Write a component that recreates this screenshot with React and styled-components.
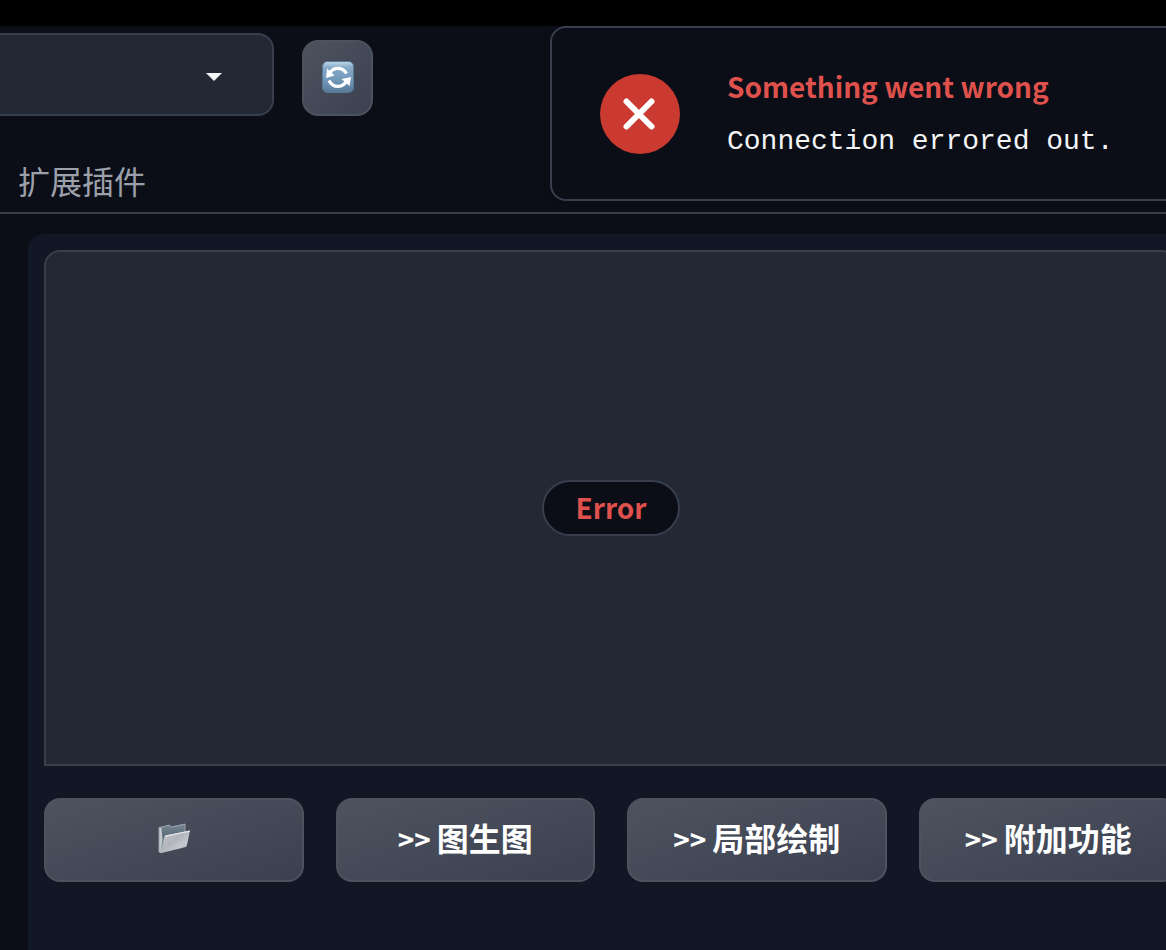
import React from "react";
import styled, { createGlobalStyle } from "styled-components";

const GlobalStyle = createGlobalStyle`
  *, *::before, *::after { box-sizing: border-box; }
  body {
    margin: 0;
    background: #0b0e17;
    font-family: "Noto Sans CJK SC", "Noto Sans", sans-serif;
    color: #f3f4f6;
  }
`;

const Page = styled.div`
  position: relative;
  display: flex;
  flex-direction: column;
  min-height: 100vh;
  overflow: hidden;
`;

const TopStrip = styled.div`
  height: 26px;
  background: #000;
`;

const Header = styled.header`
  display: flex;
  align-items: flex-end;
  gap: 28px;
  padding-top: 7px;
`;

const SelectBox = styled.label`
  display: flex;
  align-items: center;
  width: 274px;
  height: 83px;
  padding: 4px 50px 0 0;
  background: #222834;
  border: 2px solid #383e4d;
  border-left: 0;
  border-radius: 0 16px 16px 0;
`;

const Select = styled.select`
  flex: 1;
  min-width: 0;
  height: 100%;
  appearance: none;
  border: 0;
  background: transparent;
  color: inherit;
  font: inherit;
`;

const Button = styled.button`
  display: flex;
  align-items: center;
  justify-content: center;
  min-width: 0;
  width: ${(p) => p.$width || "auto"};
  height: ${(p) => p.$height};
  padding: 0 0 2px;
  border: 2px solid #4d525f;
  border-radius: 16px;
  background: linear-gradient(to bottom right, #4e535f, #3a4050) border-box;
  color: #fff;
  font-family: inherit;
  font-size: 32px;
  font-weight: 700;
  line-height: 48px;
  white-space: nowrap;
`;

const ButtonLabel = styled.span`
  display: flex;
  align-items: baseline;
  gap: 6px;
  padding-bottom: 2px;
`;

const Arrows = styled.span`
  font-size: 28px;
`;

const Tabs = styled.nav`
  display: flex;
  height: 98px;
  padding: 40px 18px 0;
  border-bottom: 2px solid #383e4d;
`;

const Tab = styled.a`
  color: #9ca0ab;
  font-size: 32px;
  line-height: 48px;
  text-decoration: none;
`;

const Panel = styled.main`
  flex: 1;
  display: flex;
  flex-direction: column;
  gap: 32px;
  margin: 20px -28px 0 28px;
  padding: 16px;
  background: #111725;
  border-radius: 16px 0 0 0;
`;

const Gallery = styled.section`
  display: flex;
  align-items: center;
  justify-content: center;
  height: 516px;
  background: #222834;
  border: 2px solid #383e4a;
  border-radius: 16px 16px 0 0;
`;

const Badge = styled.span`
  padding: 0 31px 2px;
  border: 2px solid #383e4d;
  border-radius: 28px;
  background: #0b0e17;
  color: #df514c;
  font-size: 28px;
  font-weight: 700;
  line-height: 50px;
`;

const Actions = styled.div`
  display: grid;
  grid-template-columns: repeat(4, 1fr);
  gap: 32px;
`;

const Toast = styled.div`
  position: absolute;
  top: 26px;
  left: 550px;
  right: 0;
  display: flex;
  align-items: center;
  gap: 47px;
  height: 175px;
  padding-left: 48px;
  background: #0b0e17;
  border: 2px solid #383e4d;
  border-right: 0;
  border-radius: 16px 0 0 16px;
  box-shadow: 0 2px 6px rgba(0, 0, 0, 0.2);
`;

const ToastIcon = styled.svg`
  flex: none;
`;

const ToastText = styled.div`
  display: flex;
  flex-direction: column;
  gap: 12px;
  padding-bottom: 4px;
  white-space: nowrap;
`;

const ToastTitle = styled.strong`
  color: #df514c;
  font-size: 28px;
  line-height: 48px;
`;

const ToastMessage = styled.span`
  font-family: "Liberation Mono", monospace;
  font-size: 28px;
  line-height: 40px;
`;

function RefreshIcon() {
  return (
    <svg width="32" height="32" viewBox="0 0 32 32" aria-hidden="true">
      <defs>
        <linearGradient id="refreshFace" x1="0" y1="0" x2="0" y2="1">
          <stop offset="0" stopColor="#c3d7e8" />
          <stop offset="0.2" stopColor="#86aac9" />
          <stop offset="0.6" stopColor="#7197b9" />
          <stop offset="1" stopColor="#59799a" />
        </linearGradient>
      </defs>
      <rect x="0.5" y="0.5" width="31" height="31" rx="5" fill="url(#refreshFace)" stroke="#587994" />
      <g fill="none" stroke="#fff" strokeWidth="3.2">
        <path d="M7.500 13C10 6 20 5 24.500 12.500" />
        <path d="M25 19C21 27.500 11 27.500 7 19.500" />
      </g>
      <path d="M5.200 7.500L4 17L12.500 14.500Z" fill="#fff" />
      <path d="M19.500 18L29 16L27.500 25Z" fill="#fff" />
    </svg>
  );
}

function FolderIcon() {
  return (
    <svg width="32" height="32" viewBox="0 0 32 32" aria-hidden="true">
      <defs>
        <linearGradient id="folderBack" x1="0" y1="0" x2="0" y2="1">
          <stop offset="0" stopColor="#7a8993" />
          <stop offset="0.4" stopColor="#5b6d7a" />
          <stop offset="1" stopColor="#8b979f" />
        </linearGradient>
        <linearGradient id="folderFront" x1="0" y1="0" x2="1" y2="1">
          <stop offset="0" stopColor="#c9cdd1" />
          <stop offset="0.45" stopColor="#b2b6bc" />
          <stop offset="0.7" stopColor="#c5c8cd" />
          <stop offset="1" stopColor="#92979f" />
        </linearGradient>
      </defs>
      <path
        d="M1 4.500L11.500 2L13 4L27 1L27 20L3 29.500L1 29Z"
        fill="url(#folderBack)"
        stroke="#a7b1b8"
        strokeWidth="0.8"
      />
      <path d="M1.300 5L3.500 4.600L4.500 17L2.500 29.500L1.300 29Z" fill="#c1c8cd" />
      <path
        d="M8 12.300L32 7.500L29 22C28.600 23.400 28.200 24 27 24.300L2.500 30.200L6.200 14.500C6.500 13 7 12.600 8 12.300Z"
        fill="url(#folderFront)"
      />
      <path d="M7.500 12.500L32 7.500L31.700 8.700L7 13.700Z" fill="#e5e7e9" />
    </svg>
  );
}

const SEND_TARGETS = ["图生图", "局部绘制", "附加功能"];

export default function App() {
  return (
    <Page>
      <GlobalStyle />
      <TopStrip />
      <Header>
        <SelectBox>
          <Select aria-label="模型" />
          <svg width="16" height="8" viewBox="0 0 16 8" aria-hidden="true">
            <path d="M0 0H16L8 8Z" fill="#f3f4f6" />
          </svg>
        </SelectBox>
        <Button $width="71px" $height="76px" aria-label="刷新">
          <RefreshIcon />
        </Button>
      </Header>
      <Tabs>
        <Tab href="#extensions">扩展插件</Tab>
      </Tabs>
      <Panel>
        <Gallery>
          <Badge>Error</Badge>
        </Gallery>
        <Actions>
          <Button $height="84px" aria-label="打开文件夹">
            <FolderIcon />
          </Button>
          {SEND_TARGETS.map((name) => (
            <Button key={name} $height="84px">
              <ButtonLabel>
                <Arrows>&gt;&gt;</Arrows>
                <span>{name}</span>
              </ButtonLabel>
            </Button>
          ))}
        </Actions>
      </Panel>
      <Toast role="alert">
        <ToastIcon width="80" height="80" viewBox="0 0 80 80" aria-hidden="true">
          <circle cx="40" cy="40" r="40" fill="#ca3a31" />
          <path d="M26.500 27.500L51.500 52.500M51.500 27.500L26.500 52.500" stroke="#fff" strokeWidth="6" strokeLinecap="round" />
        </ToastIcon>
        <ToastText>
          <ToastTitle>Something went wrong</ToastTitle>
          <ToastMessage>Connection errored out.</ToastMessage>
        </ToastText>
      </Toast>
    </Page>
  );
}
